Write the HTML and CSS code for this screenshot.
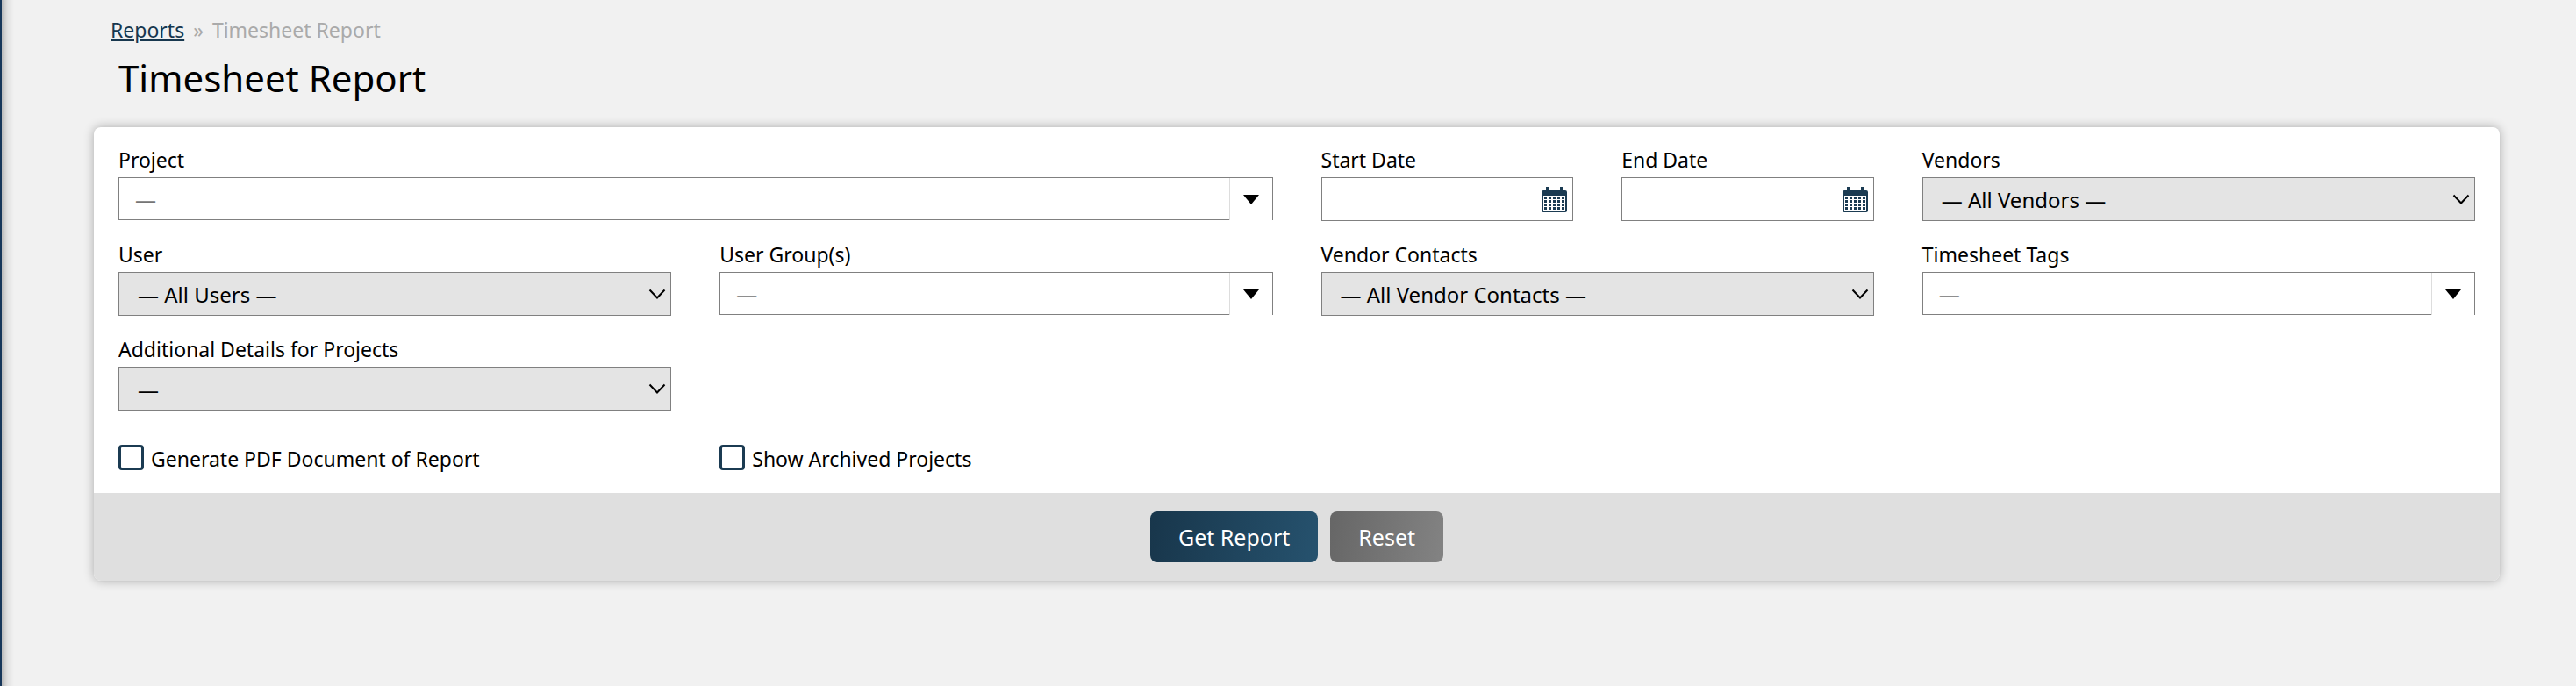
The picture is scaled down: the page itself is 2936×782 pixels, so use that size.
FILE: index.html
```html
<!DOCTYPE html>
<html lang="en">
<head>
  <meta charset="UTF-8">
  <title>Timesheet Report</title>
  <link rel="stylesheet" href="styles.css">
</head>
<body>
  <svg class="sprite" aria-hidden="true">
    <symbol id="chevron" viewBox="0 0 20 12">
      <path d="M1.500 1.500 10 10.500 18.500 1.500" fill="none" stroke="#000" stroke-width="2"/>
    </symbol>
    <symbol id="arrow" viewBox="0 0 18 11">
      <path d="M0 0H18L9 11Z" fill="#000"/>
    </symbol>
    <symbol id="calendar" viewBox="0 0 29 29">
      <path fill="#1b3b52" fill-rule="evenodd" d="M5 0h3v4h13V0h3v4h3a2 2 0 0 1 2 2v21a2 2 0 0 1-2 2H2a2 2 0 0 1-2-2V6a2 2 0 0 1 2-2h3ZM2 10v17h25V10Z"/>
      <path stroke="#1b3b52" stroke-width="3" stroke-dasharray="3 2" d="M3 12.500H26M3 16.500H26M3 20.500H26M3 24.500H26"/>
      <path stroke="#fff" stroke-width="1" d="M2 14.500H27M2 18.500H27M2 22.500H27"/>
    </symbol>
  </svg>

  <main class="page">
    <nav class="breadcrumb">
      <a href="#">Reports</a>
      <span>»</span>
      <span>Timesheet Report</span>
    </nav>
    <h1>Timesheet Report</h1>

    <form class="card">
      <div class="fields">
        <div class="field span-4">
          <label for="project">Project</label>
          <div class="combo">
            <input type="text" id="project" placeholder="—">
            <button type="button" aria-label="Show projects"><svg><use href="#arrow"/></svg></button>
          </div>
        </div>
        <div class="field">
          <label for="startDate">Start Date</label>
          <div class="date">
            <input type="text" id="startDate">
            <button type="button" aria-label="Pick start date"><svg><use href="#calendar"/></svg></button>
          </div>
        </div>
        <div class="field">
          <label for="endDate">End Date</label>
          <div class="date">
            <input type="text" id="endDate">
            <button type="button" aria-label="Pick end date"><svg><use href="#calendar"/></svg></button>
          </div>
        </div>
        <div class="field span-2">
          <label for="vendors">Vendors</label>
          <div class="select">
            <select id="vendors"><option>— All Vendors —</option></select>
            <svg><use href="#chevron"/></svg>
          </div>
        </div>

        <div class="field span-2">
          <label for="user">User</label>
          <div class="select">
            <select id="user"><option>— All Users —</option></select>
            <svg><use href="#chevron"/></svg>
          </div>
        </div>
        <div class="field span-2">
          <label for="userGroups">User Group(s)</label>
          <div class="combo">
            <input type="text" id="userGroups" placeholder="—">
            <button type="button" aria-label="Show user groups"><svg><use href="#arrow"/></svg></button>
          </div>
        </div>
        <div class="field span-2">
          <label for="vendorContacts">Vendor Contacts</label>
          <div class="select">
            <select id="vendorContacts"><option>— All Vendor Contacts —</option></select>
            <svg><use href="#chevron"/></svg>
          </div>
        </div>
        <div class="field span-2">
          <label for="tags">Timesheet Tags</label>
          <div class="combo">
            <input type="text" id="tags" placeholder="—">
            <button type="button" aria-label="Show timesheet tags"><svg><use href="#arrow"/></svg></button>
          </div>
        </div>

        <div class="field span-2">
          <label for="details">Additional Details for Projects</label>
          <div class="select">
            <select id="details"><option>—</option></select>
            <svg><use href="#chevron"/></svg>
          </div>
        </div>
      </div>

      <div class="checks">
        <div class="check">
          <input type="checkbox" id="pdf">
          <label for="pdf">Generate PDF Document of Report</label>
        </div>
        <div class="check">
          <input type="checkbox" id="archived">
          <label for="archived">Show Archived Projects</label>
        </div>
      </div>

      <div class="actions">
        <button type="submit" class="btn btn-primary">Get Report</button>
        <button type="reset" class="btn btn-secondary">Reset</button>
      </div>
    </form>
  </main>
</body>
</html>
```
FILE: styles.css
```css
* {
  box-sizing: border-box;
}
body {
  margin: 0;
  min-height: 100vh;
  background: #f1f1f1;
  border-left: 2px solid #17375a;
  font-family: "Noto Sans", "Open Sans", sans-serif;
  font-size: 23px;
  line-height: 33px;
  color: #000;
}
input, select, button {
  font: inherit;
  font-size: 24px;
  color: inherit;
  margin: 0;
}
.sprite {
  display: none;
}
.page {
  min-height: 100vh;
  padding: 18px 87px 0 105px;
  background: linear-gradient(to right, rgba(0,0,0,0.22), rgba(0,0,0,0.06) 7px, transparent 14px);
}
.breadcrumb {
  display: flex;
  gap: 10px;
  padding-left: 19px;
  color: #aaa;
}
.breadcrumb a {
  color: #17374e;
}
h1 {
  margin: 8px 28px 26px;
  font-size: 42px;
  font-weight: normal;
  line-height: 60px;
}
.card {
  background: #fff;
  border-radius: 8px;
  box-shadow: 0 0 12px rgba(0,0,0,0.3);
  overflow: hidden;
}
.fields {
  display: grid;
  grid-template-columns: repeat(8, minmax(0, 1fr));
  gap: 22px 55px;
  padding: 21px 28px 0;
}
.span-2 {
  grid-column: span 2;
}
.span-4 {
  grid-column: span 4;
}
.field label {
  display: block;
  margin-bottom: 3px;
}

/* text box with a drop-down button */
.combo {
  display: flex;
  height: 49px;
  border: 1px solid #808080;
  border-width: 1px 1px 0;
}
.combo input {
  flex: 1;
  min-width: 0;
  padding: 0 18px;
  border: 0;
  border-bottom: 1px solid #808080;
  background: #fff;
}
.combo input::placeholder {
  color: #757575;
}
.combo button {
  display: flex;
  align-items: center;
  justify-content: center;
  width: 49px;
  padding: 0;
  border: 0;
  border-left: 1px solid #ddd;
  background: #fff;
}
.combo svg {
  width: 18px;
  height: 11px;
}

.date {
  display: flex;
  align-items: center;
  height: 50px;
  padding-right: 6px;
  border: 1px solid #808080;
}
.date input {
  flex: 1;
  min-width: 0;
  height: 100%;
  padding: 0 18px;
  border: 0;
  background: none;
}
.date button {
  display: flex;
  padding: 0;
  border: 0;
  background: none;
}
.date svg {
  width: 29px;
  height: 29px;
}

.select {
  display: grid;
  align-items: center;
}
.select select, .select svg {
  grid-area: 1 / 1;
}
.select select {
  appearance: none;
  width: 100%;
  height: 50px;
  padding: 0 40px 0 21px;
  border: 1px solid #808080;
  border-radius: 0;
  background: #e4e4e4;
}
.select svg {
  justify-self: end;
  width: 20px;
  height: 12px;
  margin-right: 6px;
  pointer-events: none;
}

.checks {
  display: grid;
  grid-template-columns: repeat(4, minmax(0, 1fr));
  column-gap: 55px;
  padding: 39px 28px 22px;
}
.check {
  display: flex;
  gap: 8px;
}
.check input {
  appearance: none;
  width: 29px;
  height: 29px;
  border: 3px solid #1b3b52;
  border-radius: 4px;
  background: #fff;
}

.actions {
  display: flex;
  justify-content: center;
  gap: 14px;
  padding: 21px;
  background: #dfdfdf;
}
.btn {
  height: 58px;
  padding: 0 32px;
  border: 0;
  border-radius: 8px;
  font-size: 25px;
  color: #fff;
}
.btn-primary {
  background: linear-gradient(100deg, #18364b, #26526e);
}
.btn-secondary {
  background: linear-gradient(100deg, #666, #838383);
}
```
